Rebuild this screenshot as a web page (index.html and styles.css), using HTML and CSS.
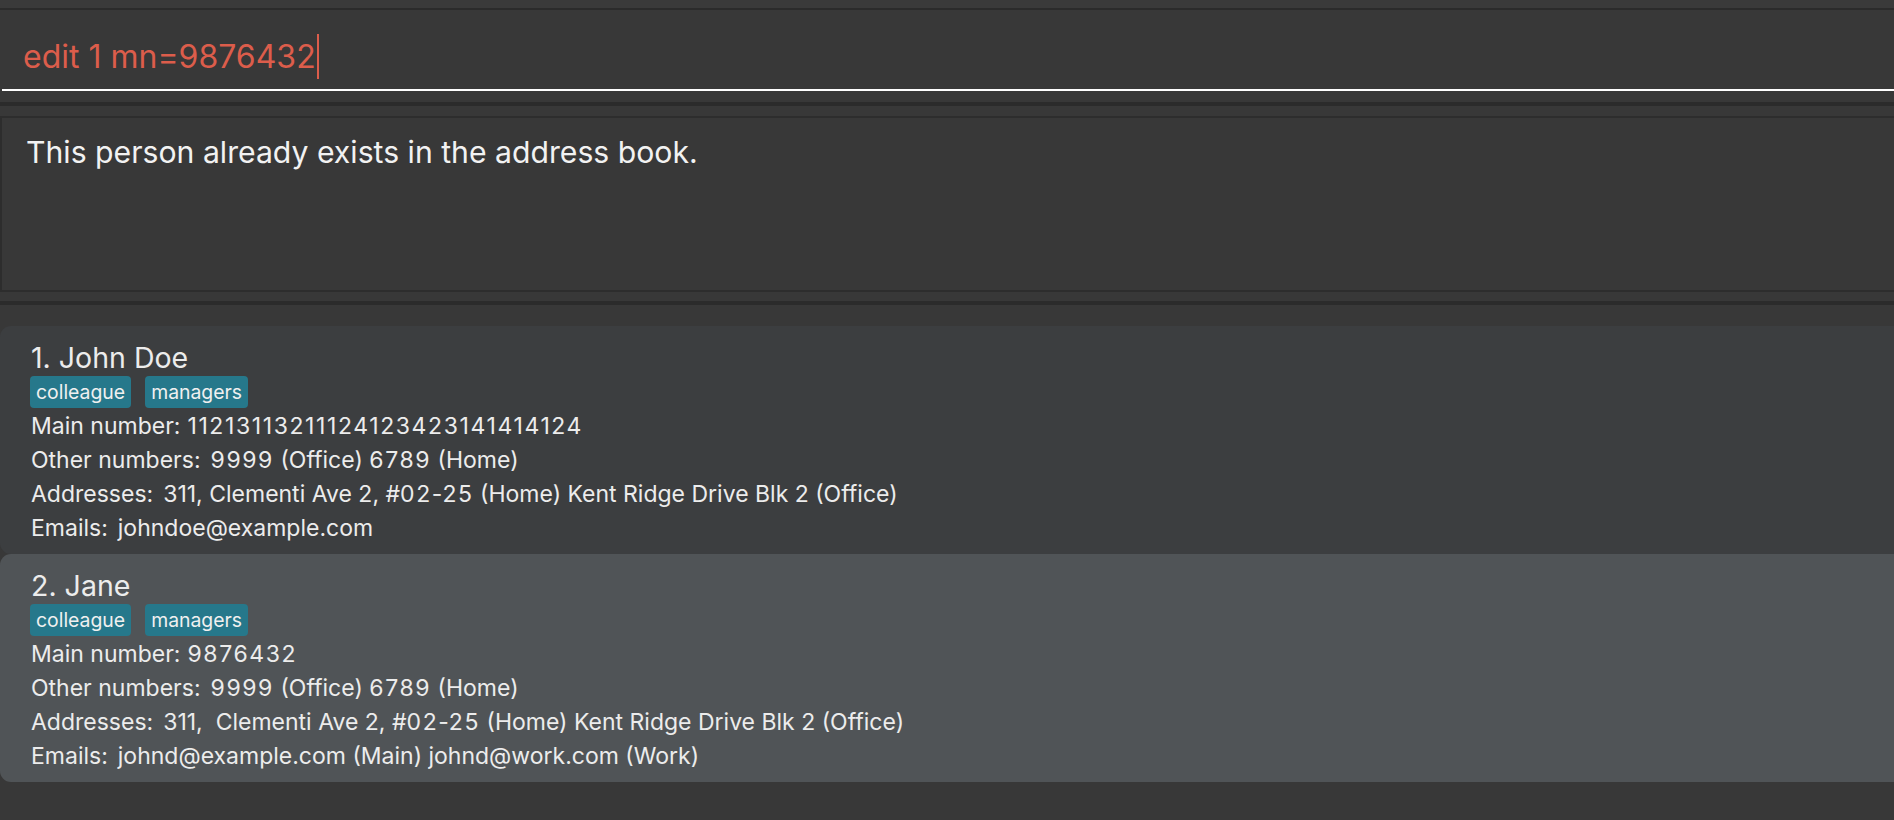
FILE: index.html
```html
<!DOCTYPE html>
<html lang="en">
<head>
<meta charset="utf-8">
<title>Address Book</title>
<link rel="stylesheet" href="styles.css">
</head>
<body>
<div class="app">
  <div class="topbar"></div>
  <div class="command-pane">
    <div class="command-field"><span class="command-text">edit 1 mn=9876432</span><span class="caret"></span></div>
  </div>
  <div class="result-pane">
    <div class="result-box">This person already exists in the address book.</div>
  </div>
  <div class="person-list">
    <div class="card card-even">
      <div class="name">1. John Doe</div>
      <div class="tags"><span class="tag">colleague</span><span class="tag">managers</span></div>
      <div class="row"><span class="label label-main">Main number:</span><span class="value"><span class="num">11213113211124123423141414124</span></span></div>
      <div class="row"><span class="label">Other numbers:</span><span class="value"><span class="num">9999</span> (Office) <span class="num">6789</span> (Home)</span></div>
      <div class="row"><span class="label">Addresses:</span><span class="value">311, Clementi Ave 2, #<span class="num">02</span>-<span class="num">25</span> (Home) Kent Ridge Drive Blk 2 (Office)</span></div>
      <div class="row"><span class="label">Emails:</span><span class="value">johndoe@example.com</span></div>
    </div>
    <div class="card card-odd">
      <div class="name">2. Jane</div>
      <div class="tags"><span class="tag">colleague</span><span class="tag">managers</span></div>
      <div class="row"><span class="label label-main">Main number:</span><span class="value"><span class="num">9876432</span></span></div>
      <div class="row"><span class="label">Other numbers:</span><span class="value"><span class="num">9999</span> (Office) <span class="num">6789</span> (Home)</span></div>
      <div class="row"><span class="label">Addresses:</span><span class="value">311,&nbsp; Clementi Ave 2, #<span class="num">02</span>-<span class="num">25</span> (Home) Kent Ridge Drive Blk 2 (Office)</span></div>
      <div class="row"><span class="label">Emails:</span><span class="value">johnd@example.com (Main) johnd@work.com (Work)</span></div>
    </div>
  </div>
</div>
</body>
</html>
```

FILE: styles.css
```css
html, body {
  margin: 0;
  padding: 0;
  background: #383838;
  overflow: hidden;
}

body {
  font-family: "Inter", "Noto Sans", sans-serif;
  color: #ececec;
}

.app {
  display: flex;
  flex-direction: column;
}

.topbar {
  height: 8px;
  background: #3a3a3a;
  border-bottom: 2px solid #2b2b2b;
}

.command-pane {
  padding: 25px 0 11px 0;
  border-bottom: 4px solid #2b2b2b;
}

.command-field {
  margin-left: 2px;
  padding: 0 0 10px 21px;
  border-bottom: 2px solid #ffffff;
  display: flex;
  align-items: stretch;
  height: 44px;
}

.command-text {
  font-size: 32px;
  line-height: 44px;
  color: #dc5d4b;
  white-space: pre;
}

.caret {
  width: 2px;
  background: #dc5d4b;
  margin-left: 1px;
  margin-top: -1px;
}

.result-pane {
  padding: 10px 0 9px 0;
  border-bottom: 4px solid #2b2b2b;
}

.result-box {
  box-sizing: border-box;
  height: 176px;
  border: 2px solid #2d2d2d;
  border-right: none;
  padding: 16px 24px;
  font-size: 30.2px;
  line-height: 36px;
  color: #f2f2f2;
}

.person-list {
  padding-top: 21px;
  display: flex;
  flex-direction: column;
}

.card {
  box-sizing: border-box;
  height: 228px;
  padding: 15px 0 0 30px;
  border-radius: 11px 0 0 11px;
}

.card-even {
  background: #3c3e40;
}

.card-odd {
  background: #505457;
}

.name {
  font-size: 28.5px;
  line-height: 34px;
  padding-left: 1px;
}

.tags {
  display: flex;
  gap: 14px;
  height: 32px;
  margin-top: 1px;
  margin-bottom: 1px;
}

.tag {
  background: #26788b;
  border-radius: 4px;
  padding: 0 6px;
  font-size: 19.4px;
  line-height: 32px;
  color: #f0f0f0;
}

.row {
  font-size: 23px;
  line-height: 34px;
  padding-left: 1px;
  white-space: nowrap;
}

.label {
  margin-right: 10px;
}

.label-main {
  margin-right: 7px;
}

.num {
  letter-spacing: 1.6px;
}
```
